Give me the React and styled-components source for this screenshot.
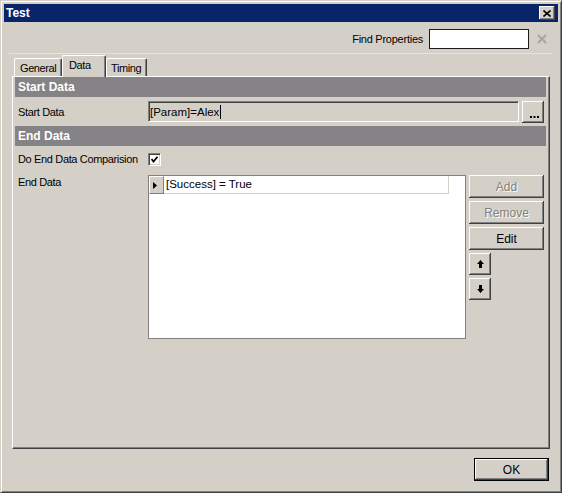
import React from "react";
import styled, { createGlobalStyle, css } from "styled-components";

const GlobalStyle = createGlobalStyle`
  html, body {
    margin: 0;
    padding: 0;
    background: #d4d0c8;
  }
  body {
    font-family: "Liberation Sans", Arial, sans-serif;
    font-size: 11px;
    color: #000;
  }
  * {
    box-sizing: border-box;
  }
`;

const raised = css`
  background: #d4d0c8;
  box-shadow: inset -1px -1px #404040, inset 1px 1px #ffffff,
    inset -2px -2px #808080, inset 2px 2px #d4d0c8;
`;

const Window = styled.div`
  width: 562px;
  height: 493px;
  background: #d4d0c8;
  border: 1px solid;
  border-color: #d4d0c8 #404040 #404040 #d4d0c8;
  box-shadow: inset 1px 1px #ffffff, inset -1px -1px #808080;
  padding: 3px;
  display: flex;
  flex-direction: column;
`;

const TitleBar = styled.div`
  height: 18px;
  flex: none;
  background: #0a246a;
  color: #fff;
  font-weight: bold;
  font-size: 12px;
  display: flex;
  align-items: center;
  justify-content: space-between;
  padding: 0 3px 0 2px;
`;

const CloseButton = styled.div`
  ${raised};
  width: 16px;
  height: 14px;
  display: flex;
  align-items: center;
  justify-content: center;
  padding-right: 1px;
`;

const Body = styled.div`
  flex: 1;
  display: flex;
  flex-direction: column;
`;

const FindBar = styled.div`
  display: flex;
  justify-content: flex-end;
  align-items: center;
  height: 20px;
  margin-top: 7px;
  padding-right: 11px;
  label {
    margin-right: 6px;
    letter-spacing: -0.25px;
  }
`;

const FindInput = styled.div`
  width: 100px;
  height: 20px;
  background: #fff;
  border: 1px solid #1c1c1c;
`;

const ClearIcon = styled.div`
  width: 10px;
  height: 10px;
  margin-left: 8px;
  display: flex;
`;

const Separator = styled.div`
  margin: 4px 5px 0 5px;
  border-top: 1px solid #e6e3de;
`;

const TabArea = styled.div`
  margin: 0 8px;
  display: flex;
  flex-direction: column;
`;

const TabStrip = styled.div`
  height: 22px;
  display: flex;
  align-items: flex-end;
  padding-left: 2px;
`;

const Tab = styled.div`
  width: ${(p) => p.$w}px;
  height: ${(p) => (p.$active ? 22 : 18)}px;
  margin-bottom: ${(p) => (p.$active ? -1 : 0)}px;
  position: relative;
  z-index: ${(p) => (p.$active ? 1 : 0)};
  background: #d4d0c8;
  border-top: 1px solid #fff;
  border-left: 1px solid #fff;
  border-right: 1px solid #404040;
  box-shadow: inset -1px 0 #808080;
  border-radius: 2px 2px 0 0;
  padding-top: ${(p) => (p.$active ? 3 : 3)}px;
  padding-left: ${(p) => p.$pad}px;
  letter-spacing: -0.4px;
`;

const Panel = styled.div`
  height: 373px;
  border-top: 1px solid #fff;
  border-left: 1px solid #fff;
  border-right: 1px solid #404040;
  border-bottom: 1px solid #404040;
  box-shadow: inset -1px -1px #808080;
  padding: 0 3px 0 2px;
`;

const SectionHeader = styled.div`
  height: 20px;
  line-height: 20px;
  background: #858385;
  color: #fff;
  font-weight: bold;
  font-size: 12px;
  padding-left: 3px;
`;

const FieldRow = styled.div`
  display: grid;
  grid-template-columns: 133px 1fr;
  align-items: ${(p) => (p.$top ? "start" : "center")};
  height: ${(p) => (p.$h ? `${p.$h}px` : "auto")};
  padding-top: ${(p) => p.$pt || 0}px;
  padding-right: 2px;
`;

const Label = styled.div`
  padding-left: 3px;
  padding-top: ${(p) => p.$pt || 0}px;
  letter-spacing: -0.35px;
`;

const InputLine = styled.div`
  display: flex;
  align-items: center;
`;

const SunkenInput = styled.div`
  flex: 1;
  height: 21px;
  background: #d4d0c8;
  border: 1px solid;
  border-color: #808080 #fff #fff #808080;
  box-shadow: inset 1px 1px #404040;
  display: flex;
  align-items: center;
  padding-left: 1px;
  font-size: 11.5px;
`;

const Caret = styled.span`
  display: inline-block;
  width: 1px;
  height: 14px;
  background: #000;
  margin-left: 1px;
`;

const EllipsisButton = styled.div`
  ${raised};
  width: 22px;
  height: 22px;
  margin-left: 3px;
  display: flex;
  align-items: flex-end;
  justify-content: center;
  padding: 0 0 5px 2px;
`;

const CheckBox = styled.div`
  width: 13px;
  height: 13px;
  background: #fff;
  border: 1px solid;
  border-color: #808080 #fff #fff #808080;
  box-shadow: inset 1px 1px #404040, inset -1px -1px #d4d0c8;
  display: flex;
  align-items: center;
  justify-content: center;
`;

const ListWrap = styled.div`
  display: flex;
  align-items: flex-start;
`;

const ListBox = styled.div`
  width: 318px;
  height: 164px;
  background: #fff;
  border: 1px solid #808080;
`;

const ListRow = styled.div`
  display: flex;
  height: 18px;
`;

const RowHeader = styled.div`
  width: 15px;
  background: #d4d0c8;
  border-top: 1px solid #fff;
  border-left: 1px solid #fff;
  border-right: 1px solid #808080;
  border-bottom: 1px solid #808080;
  display: flex;
  align-items: center;
  padding-left: 3px;
`;

const RowCell = styled.div`
  width: 285px;
  border-right: 1px solid #d4d0c8;
  border-bottom: 1px solid #d4d0c8;
  padding-left: 2px;
  line-height: 17px;
  font-size: 11.5px;
`;

const ButtonStack = styled.div`
  margin-left: 3px;
  display: flex;
  flex-direction: column;
  gap: 3px;
`;

const Button = styled.div`
  ${raised};
  width: ${(p) => p.$w || 75}px;
  height: ${(p) => p.$h || 23}px;
  display: flex;
  align-items: center;
  justify-content: center;
  font-size: 12px;
  color: ${(p) => (p.$disabled ? "#808080" : "#000")};
  text-shadow: ${(p) => (p.$disabled ? "1px 1px #fff" : "none")};
`;

const Footer = styled.div`
  display: flex;
  justify-content: flex-end;
  padding: 9px 9px 0 0;
`;

const DefaultButton = styled.div`
  width: 75px;
  height: 23px;
  border: 1px solid #000;
  background: #d4d0c8;
  box-shadow: inset -1px -1px #404040, inset 1px 1px #ffffff,
    inset -2px -2px #808080;
  display: flex;
  align-items: center;
  justify-content: center;
  font-size: 12px;
`;

const ArrowIcon = ({ down }) => (
  <svg width="7" height="8" viewBox="0 0 7 8">
    <polygon
      points="3.5,0 7,4 5,4 5,8 2,8 2,4 0,4"
      fill="#000"
      transform={down ? "rotate(180 3.5 4)" : undefined}
    />
  </svg>
);

const App = () => {
  return (
    <>
      <GlobalStyle />
      <Window>
        <TitleBar>
          <span>Test</span>
          <CloseButton>
            <svg width="8" height="7" viewBox="0 0 8 7">
              <path d="M0.5 0.5 L7.5 6.5 M7.5 0.5 L0.5 6.5" stroke="#000" strokeWidth="1.6" />
            </svg>
          </CloseButton>
        </TitleBar>
        <Body>
          <FindBar>
            <label>Find Properties</label>
            <FindInput />
            <ClearIcon>
              <svg width="10" height="10" viewBox="0 0 10 10">
                <path d="M1 1 L9 9 M9 1 L1 9" stroke="#a8a6a2" strokeWidth="2" />
              </svg>
            </ClearIcon>
          </FindBar>
          <Separator />
          <TabArea>
            <TabStrip>
              <Tab $w={48} $pad={5}>General</Tab>
              <Tab $w={44} $pad={6} $active>
                Data
              </Tab>
              <Tab $w={41} $pad={4}>Timing</Tab>
            </TabStrip>
            <Panel>
              <SectionHeader>Start Data</SectionHeader>
              <FieldRow $h={29}>
                <Label>Start Data</Label>
                <InputLine>
                  <SunkenInput>
                    [Param]=Alex
                    <Caret />
                  </SunkenInput>
                  <EllipsisButton>
                    <svg width="9" height="2" viewBox="0 0 9 2">
                      <rect x="0" y="0" width="2" height="2" fill="#000" />
                      <rect x="3.5" y="0" width="2" height="2" fill="#000" />
                      <rect x="7" y="0" width="2" height="2" fill="#000" />
                    </svg>
                  </EllipsisButton>
                </InputLine>
              </FieldRow>
              <SectionHeader>End Data</SectionHeader>
              <FieldRow $h={25} $pt={1}>
                <Label>Do End Data Comparision</Label>
                <CheckBox>
                  <svg width="7" height="7" viewBox="0 0 7 7">
                    <path d="M0.5 3 L2.5 5.5 L6.5 0.8" stroke="#000" strokeWidth="1.8" fill="none" />
                  </svg>
                </CheckBox>
              </FieldRow>
              <FieldRow $top $pt={4}>
                <Label $pt={1}>End Data</Label>
                <ListWrap>
                  <ListBox>
                    <ListRow>
                      <RowHeader>
                        <svg width="4" height="7" viewBox="0 0 4 7">
                          <polygon points="0,0 4,3.5 0,7" fill="#000" />
                        </svg>
                      </RowHeader>
                      <RowCell>[Success] = True</RowCell>
                    </ListRow>
                  </ListBox>
                  <ButtonStack>
                    <Button $disabled>Add</Button>
                    <Button $disabled>Remove</Button>
                    <Button>Edit</Button>
                    <Button $w={22} $h={22}>
                      <ArrowIcon />
                    </Button>
                    <Button $w={22} $h={22}>
                      <ArrowIcon down />
                    </Button>
                  </ButtonStack>
                </ListWrap>
              </FieldRow>
            </Panel>
          </TabArea>
          <Footer>
            <DefaultButton>OK</DefaultButton>
          </Footer>
        </Body>
      </Window>
    </>
  );
};

export default App;
